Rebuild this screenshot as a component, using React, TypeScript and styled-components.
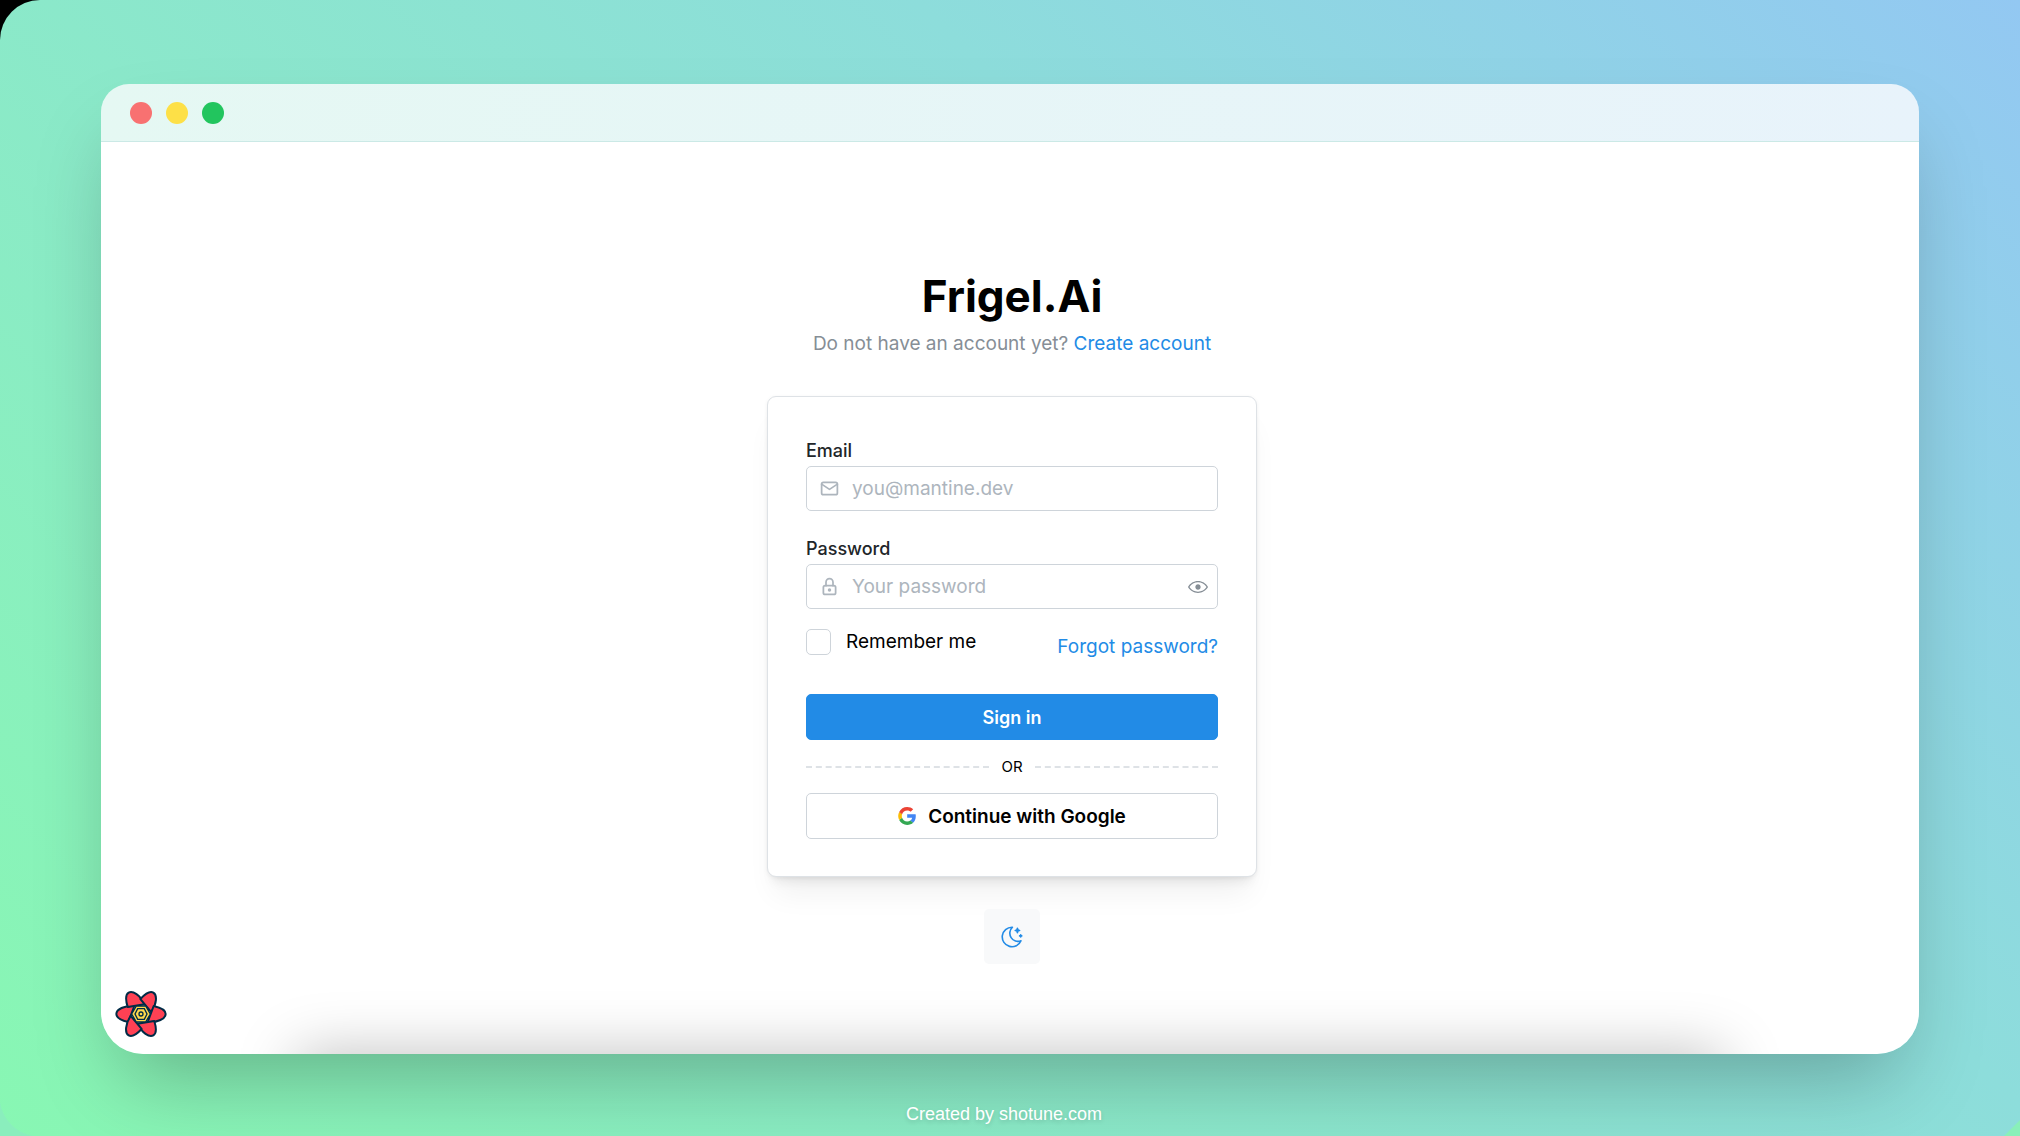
import React from 'react';
import styled, { createGlobalStyle } from 'styled-components';

const Global = createGlobalStyle`
  * { box-sizing: border-box; }
  body { margin: 0; background: #000; font-family: Inter, "Open Sans", sans-serif; color: #000; }
  button, input { font-family: inherit; }
`;

const Backdrop = styled.div`
  position: relative;
  min-height: 100vh;
  padding: 84px 5% 0;
  display: flex;
  flex-direction: column;
  border-top-left-radius: 40px;
  overflow: hidden;
  background: linear-gradient(45deg, #88f7b3 0%, #8ddddb 65%, #93c8f2 100%);
  &::before {
    content: '';
    position: absolute;
    left: 0;
    bottom: 0;
    width: 40px;
    height: 40px;
    background: radial-gradient(circle at 100% 0, transparent 40px, #8aeebd 41px);
  }
  &::after {
    content: '';
    position: absolute;
    right: 0;
    bottom: 0;
    border-style: solid;
    border-width: 0 0 16px 16px;
    border-color: transparent transparent #89f0b9;
  }
`;

const Window = styled.section`
  flex: 1;
  display: flex;
  flex-direction: column;
  border-radius: 28px 28px 42px 42px;
  box-shadow: 0 42px 84px -20px rgba(0, 0, 0, 0.27);
`;

const TitleBar = styled.header`
  display: flex;
  align-items: center;
  gap: 14px;
  height: 58px;
  padding: 0 29px;
  border-radius: 28px 28px 0 0;
  background: linear-gradient(90deg, #e5f8f3, #e8f3fb);
  border-bottom: 1px solid #cbe9e6;
`;

const Dot = styled.span<{ $color: string }>`
  width: 22px;
  height: 22px;
  border-radius: 50%;
  background: ${(p) => p.$color};
`;

const Screen = styled.main`
  position: relative;
  flex: 1;
  display: flex;
  flex-direction: column;
  align-items: center;
  padding: 124px 0 0 4px;
  background: #fff;
  border-radius: 0 0 42px 42px;
  overflow: hidden;
  &::after {
    content: '';
    position: absolute;
    top: 100%;
    left: 196px;
    right: 196px;
    height: 60px;
    box-shadow: 0 0 60px rgba(0, 0, 0, 0.26);
  }
`;

const Title = styled.h1`
  margin: 0;
  font-size: 44px;
  line-height: 60px;
  font-weight: 700;
`;

const Subtitle = styled.p`
  margin: 6px 0 0;
  font-size: 19px;
  line-height: 24px;
  color: #868e96;
`;

const Link = styled.a`
  font-size: 19px;
  line-height: 24px;
  color: #228be6;
  text-decoration: none;
`;

const Card = styled.form`
  display: flex;
  flex-direction: column;
  width: 490px;
  max-width: 100%;
  margin: 40px 0 32px;
  padding: 39px 38px 37px;
  background: #fff;
  border: 1px solid #dee2e6;
  border-radius: 9px;
  box-shadow: 0 1px 4px rgba(0, 0, 0, 0.06), 0 24px 30px -8px rgba(0, 0, 0, 0.06),
    0 10px 12px -6px rgba(0, 0, 0, 0.08);
`;

const Field = styled.div`
  display: flex;
  flex-direction: column;
  margin-bottom: 23px;
`;

const Label = styled.label`
  font-size: 18px;
  line-height: 30px;
  font-weight: 500;
  color: #212529;
`;

const InputBox = styled.div`
  display: flex;
  align-items: center;
  gap: 12px;
  height: 45px;
  padding: 0 9px 0 12px;
  border: 1px solid #ced4da;
  border-radius: 5px;
  color: #adb5bd;
`;

const Input = styled.input`
  flex: 1;
  min-width: 0;
  padding: 0;
  border: 0;
  outline: 0;
  background: transparent;
  font-size: 19px;
  line-height: 24px;
  &::placeholder { color: #adb5bd; }
`;

const EyeButton = styled.button`
  display: flex;
  padding: 0;
  border: 0;
  background: transparent;
  color: #868e96;
`;

const Options = styled.div`
  display: flex;
  justify-content: space-between;
  align-items: flex-end;
  height: 31px;
  margin: -4px 0 35px;
`;

const Remember = styled.label`
  display: flex;
  align-items: center;
  gap: 15px;
  height: 32px;
  margin-bottom: 1px;
  font-size: 19px;
  line-height: 24px;
`;

const Checkbox = styled.input`
  appearance: none;
  width: 25px;
  height: 26px;
  margin: 0;
  border: 1px solid #ced4da;
  border-radius: 5px;
  background: #fff;
`;

const Button = styled.button<{ $primary?: boolean }>`
  display: flex;
  align-items: center;
  justify-content: center;
  gap: 12px;
  height: 46px;
  padding: 0 22px;
  border: 1px solid ${(p) => (p.$primary ? '#228be6' : '#ced4da')};
  border-radius: 5px;
  background: ${(p) => (p.$primary ? '#228be6' : '#fff')};
  color: ${(p) => (p.$primary ? '#fff' : '#000')};
  font-size: ${(p) => (p.$primary ? '18px' : '19px')};
  font-weight: 600;
`;

const Divider = styled.div`
  display: flex;
  align-items: center;
  gap: 12px;
  height: 53px;
  font-size: 15px;
  &::before, &::after {
    content: '';
    flex: 1;
    border-top: 2px dashed #dee2e6;
  }
`;

const ThemeButton = styled.button`
  display: grid;
  place-items: center;
  width: 56px;
  height: 55px;
  padding: 0;
  border: 0;
  border-radius: 5px;
  background: #f8f9fa;
  color: #228be6;
`;

const QueryButton = styled.button`
  position: absolute;
  left: 14px;
  bottom: 16px;
  display: flex;
  padding: 0;
  border: 0;
  background: transparent;
`;

const Footer = styled.footer`
  height: 82px;
  padding: 48px 12px 0 0;
  text-align: center;
  font-family: "Liberation Sans", Arial, sans-serif;
  font-size: 18px;
  line-height: 24px;
  color: #fff;
  text-shadow: 0 2px 4px rgba(0, 0, 0, 0.15);
`;

const Line = ({ size, width = 2, children }: { size: number; width?: number; children: React.ReactNode }) => (
  <svg width={size} height={size} viewBox="0 0 24 24" fill="none" stroke="currentColor" strokeWidth={width} strokeLinecap="round" strokeLinejoin="round" aria-hidden="true">
    {children}
  </svg>
);

const MailIcon = () => (
  <Line size={21}>
    <rect x="3" y="5" width="18" height="14" rx="2" />
    <path d="M3 7l9 6l9-6" />
  </Line>
);

const LockIcon = () => (
  <Line size={21}>
    <rect x="5" y="11" width="14" height="10" rx="2" />
    <circle cx="12" cy="16" r="1" />
    <path d="M8 11V7a4 4 0 0 1 8 0v4" />
  </Line>
);

const EyeIcon = () => (
  <svg width="20" height="20" viewBox="0 0 15 15" aria-hidden="true">
    <path fill="currentColor" fillRule="evenodd" clipRule="evenodd" d="M7.5 11C4.80285 11 2.52952 9.62184 1.09622 7.50001C2.52952 5.37816 4.80285 4 7.5 4C10.1971 4 12.4705 5.37816 13.9038 7.50001C12.4705 9.62183 10.1971 11 7.5 11ZM7.5 3C4.30786 3 1.65639 4.70638 0.0760002 7.23501C-0.0253338 7.39715 -0.0253334 7.60288 0.0760014 7.76501C1.65639 10.2936 4.30786 12 7.5 12C10.6921 12 13.3436 10.2936 14.924 7.76501C15.0253 7.60288 15.0253 7.39715 14.924 7.23501C13.3436 4.70638 10.6921 3 7.5 3ZM7.5 9.5C8.60457 9.5 9.5 8.60457 9.5 7.5C9.5 6.39543 8.60457 5.5 7.5 5.5C6.39543 5.5 5.5 6.39543 5.5 7.5C5.5 8.60457 6.39543 9.5 7.5 9.5Z" />
  </svg>
);

const MoonIcon = () => (
  <Line size={26} width={1.5}>
    <path d="M12 3c.132 0 .263 0 .393 0a7.5 7.5 0 0 0 7.92 12.446a9 9 0 1 1-8.313-12.454z" />
    <path d="M17 4a2 2 0 0 0 2 2a2 2 0 0 0-2 2a2 2 0 0 0-2-2a2 2 0 0 0 2-2" />
    <path d="M19 11h2m-1-1v2" />
  </Line>
);

const GoogleIcon = () => (
  <svg width="18" height="18" viewBox="0 0 256 262" aria-hidden="true">
    <path fill="#4285F4" d="M255.878 133.451c0-10.734-.871-18.567-2.756-26.69H130.55v48.448h71.947c-1.45 12.04-9.283 30.172-26.69 42.356l-.244 1.622 38.755 30.023 2.685.268c24.659-22.774 38.875-56.282 38.875-96.027" />
    <path fill="#34A853" d="M130.55 261.1c35.248 0 64.839-11.605 86.453-31.622l-41.196-31.913c-11.024 7.688-25.82 13.055-45.257 13.055-34.523 0-63.824-22.773-74.269-54.25l-1.531.13-40.298 31.187-.527 1.465C35.393 231.798 79.49 261.1 130.55 261.1" />
    <path fill="#FBBC05" d="M56.281 156.37c-2.756-8.123-4.351-16.827-4.351-25.82 0-8.994 1.595-17.697 4.206-25.82l-.073-1.73L15.26 71.312l-1.335.635C5.077 89.644 0 109.517 0 130.55s5.077 40.905 13.925 58.602l42.356-32.782" />
    <path fill="#EB4335" d="M130.55 50.479c24.514 0 41.05 10.589 50.479 19.438l36.844-35.974C195.245 12.91 165.798 0 130.55 0 79.49 0 35.393 29.301 13.925 71.947l42.211 32.783c10.59-31.477 39.891-54.251 74.414-54.251" />
  </svg>
);

const QueryLogo = () => (
  <svg width="52" height="48" viewBox="-39 -36 78 72" aria-hidden="true">
    {[0, 60, 120, 180, 240, 300].map((angle) => (
      <path
        key={angle}
        d="M-19 12C-28 10 -37 6 -37 0C-37 -7 -25 -13 -10 -12Z"
        transform={`rotate(${angle})`}
        fill="#ff4154"
        stroke="#002b46"
        strokeWidth="3"
        strokeLinejoin="round"
      />
    ))}
    <path d="M-7 -12H7L14 0L7 12H-7L-14 0Z" fill="#ffd94c" stroke="#002b46" strokeWidth="2" />
    <path d="M-5 -8H5L9 0L5 8H-5L-9 0Z" fill="#ffd94c" stroke="#002b46" strokeWidth="2" />
    <circle r="3" fill="#ffd94c" stroke="#002b46" strokeWidth="2" />
  </svg>
);

export default function App() {
  return (
    <>
      <Global />
      <Backdrop>
        <Window>
          <TitleBar>
            <Dot $color="#f87171" />
            <Dot $color="#fde047" />
            <Dot $color="#22c55e" />
          </TitleBar>
          <Screen>
            <Title>Frigel.Ai</Title>
            <Subtitle>
              Do not have an account yet? <Link href="#create">Create account</Link>
            </Subtitle>
            <Card>
              <Field>
                <Label htmlFor="email">Email</Label>
                <InputBox>
                  <MailIcon />
                  <Input id="email" type="email" placeholder="you@mantine.dev" />
                </InputBox>
              </Field>
              <Field>
                <Label htmlFor="password">Password</Label>
                <InputBox>
                  <LockIcon />
                  <Input id="password" type="password" placeholder="Your password" />
                  <EyeButton type="button" aria-label="Show password"><EyeIcon /></EyeButton>
                </InputBox>
              </Field>
              <Options>
                <Remember htmlFor="remember">
                  <Checkbox id="remember" type="checkbox" />
                  Remember me
                </Remember>
                <Link href="#forgot">Forgot password?</Link>
              </Options>
              <Button type="button" $primary>Sign in</Button>
              <Divider>OR</Divider>
              <Button type="button"><GoogleIcon />Continue with Google</Button>
            </Card>
            <ThemeButton type="button" aria-label="Toggle colour scheme"><MoonIcon /></ThemeButton>
            <QueryButton type="button" aria-label="Open query tools"><QueryLogo /></QueryButton>
          </Screen>
        </Window>
        <Footer>Created by shotune.com</Footer>
      </Backdrop>
    </>
  );
}
